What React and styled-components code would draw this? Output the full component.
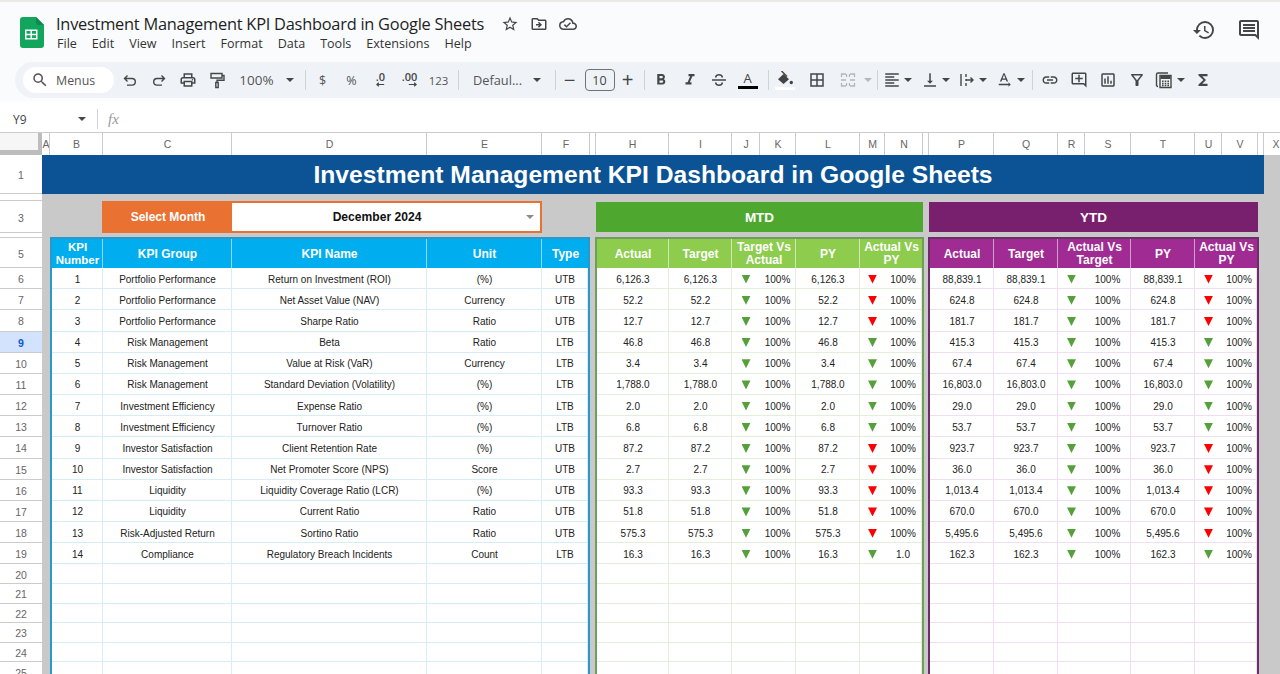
import React from 'react';
import styled, { createGlobalStyle } from 'styled-components';
import {
  MdSearch, MdOutlineLocalPrintshop, MdFormatBold, MdFormatItalic,
  MdBorderAll, MdFormatAlignLeft, MdVerticalAlignBottom,
  MdLink, MdOutlineAddComment, MdOutlineAssessment, MdOutlineFilterAlt, MdFunctions,
  MdHistory, MdOutlineComment, MdStarBorder, MdOutlineDriveFileMove, MdOutlineCloudDone, MdOutlineTextRotationNone,
} from 'react-icons/md';

const GlobalStyle = createGlobalStyle`
  html, body { margin: 0; padding: 0; height: 100%; overflow: hidden; background: #fff; }
  body { font-family: "Liberation Sans", Arial, sans-serif; }
`;

const Page = styled.div`
  width: 1280px;
  height: 674px;
  overflow: hidden;
  background: #f9fbfd;
  border-top: 2px solid #e9ebe4;
  box-sizing: border-box;
  display: flex;
  flex-direction: column;
`;

/* ---------- title bar ---------- */

const TitleBar = styled.header`
  height: 60px;
  flex: none;
  display: flex;
  align-items: flex-start;
  padding: 15px 19px 0 20px;
  box-sizing: border-box;
`;

const DocInfo = styled.div`
  margin-left: 12px;
  flex: 1;
`;

const DocRow = styled.div`
  display: flex;
  align-items: center;
  height: 16px;
  margin-top: -1px;
`;

const DocTitle = styled.div`
  font-family: "Open Sans", sans-serif;
  font-size: 16.4px;
  letter-spacing: -.25px;
  line-height: 16px;
  color: #1f1f1f;
  width: 439px;
  white-space: nowrap;
`;

const TitleIcon = styled.span`
  display: flex;
  width: 29px;
  justify-content: center;
  color: #444746;
  font-size: 18px;
`;

const MenuBar = styled.nav`
  display: flex;
  gap: 15px;
  margin: 5px 0 0 1px;
  font-family: "Open Sans", sans-serif;
  font-size: 12.55px;
  line-height: 14px;
  color: #333;
`;

const SideIcons = styled.div`
  display: flex;
  gap: 21px;
  margin-top: 1px;
  color: #444746;
  font-size: 24px;
`;

const SideIcon = styled.span`
  display: flex;
`;

/* ---------- toolbar ---------- */

const Toolbar = styled.div`
  flex: none;
  height: 36px;
  margin-left: 15px;
  padding-left: 8px;
  background: #eff3f8;
  border-radius: 18px 0 0 18px;
  display: flex;
  align-items: center;
  color: #444746;
`;

const SearchPill = styled.div`
  width: 91px;
  height: 26px;
  box-sizing: border-box;
  padding-left: 8px;
  flex: none;
  display: flex;
  align-items: center;
  gap: 7px;
  background: #fff;
  border-radius: 13px;
  font-family: "Open Sans", sans-serif;
  font-size: 12.4px;
  color: #555;
`;

const Tool = styled.div`
  flex: none;
  width: ${p => p.$w || 29}px;
  margin-left: ${p => p.$ml || 0}px;
  display: flex;
  align-items: center;
  justify-content: center;
  font-size: ${p => p.$size || 18}px;
  color: ${p => p.$muted ? '#b4b7ba' : 'inherit'};
`;

const ToolText = styled(Tool)`
  font-family: "Open Sans", sans-serif;
  font-size: ${p => p.$size || 12.5}px;
  color: #555;
  white-space: nowrap;
`;

const Caret = styled.div`
  flex: none;
  width: ${p => p.$w || 10}px;
  margin-left: ${p => p.$ml || 0}px;
  display: flex;
  justify-content: center;

  &::after {
    content: '';
    border-left: 4px solid transparent;
    border-right: 4px solid transparent;
    border-top: 4px solid ${p => p.$muted ? '#b4b7ba' : '#444746'};
  }
`;

const Sep = styled.div`
  flex: none;
  width: 1px;
  height: 20px;
  margin-left: ${p => p.$l || 0}px;
  margin-right: ${p => p.$r || 0}px;
  background: #cfd3d8;
`;

const SizeBox = styled.div`
  flex: none;
  width: 30px;
  height: 22px;
  margin-left: 5px;
  box-sizing: border-box;
  border: 1px solid #6f7276;
  border-radius: 4px;
  display: flex;
  align-items: center;
  justify-content: center;
  font-family: "Open Sans", sans-serif;
  font-size: 12.5px;
  color: #444;
`;

const Decimal = styled.div`
  display: flex;
  flex-direction: column;
  align-items: flex-end;
  font-family: "Open Sans", sans-serif;
  font-size: 11px;
  font-weight: 600;
  line-height: 11px;
  margin-top: -2px;
`;

const ColorIcon = styled.div`
  display: flex;
  flex-direction: column;
  align-items: center;
  width: ${p => p.$w}px;
  font-size: 13px;
  line-height: 13px;
  font-family: "Open Sans", sans-serif;
  color: #444;
`;

const ColorBar = styled.div`
  align-self: stretch;
  height: 3px;
  margin-top: ${p => p.$top || 1}px;
  background: ${p => p.$color};
`;

/* ---------- formula bar ---------- */

const FormulaBar = styled.div`
  flex: none;
  height: 34px;
  box-sizing: border-box;
  padding-top: 8px;
  background: linear-gradient(#f9fbfd 0, #fff 6px);
  display: flex;
  align-items: center;
  color: #444;
`;

const CellRef = styled.div`
  width: 63px;
  padding-left: 13px;
  font-family: "Open Sans", sans-serif;
  font-size: 12px;
`;

const Fx = styled.div`
  margin-left: 10px;
  font-family: "Liberation Serif", serif;
  font-style: italic;
  font-size: 15px;
  color: #999;
`;

/* ---------- sheet ---------- */

const Sheet = styled.div`
  flex: 1;
  display: grid;
  grid-template-columns: 42px 8px 53px 129px 195px 115px 48px 6px 73px 63px 28px 36px 64px 25px 38px 6px 65px 64px 27px 46px 64px 27px 36px 6px 24px;
  grid-template-rows: 22px 39px 7px 32px 5px 30px repeat(14, 21.18px) repeat(7, 19.6px);
  background: #c9c9c9;
  overflow: hidden;
  border-top: 1px solid #ccc;
`;

const Corner = styled.div`
  grid-column: 1;
  grid-row: 1;
  background: #f6f6f6;
  border-right: 4px solid #bdbdbd;
  border-bottom: 5px solid #bdbdbd;
`;

const ColHead = styled.div`
  background: #fff;
  border-right: 1px solid #ccc;
  box-sizing: border-box;
  padding-left: 1px;
  display: flex;
  align-items: center;
  justify-content: center;
  overflow: hidden;
  font-size: 10.5px;
  color: #666;
`;

const RowHead = styled.div`
  grid-column: 1;
  grid-row: ${p => p.$row};
  background: ${p => p.$active ? '#d3e3fd' : '#fff'};
  border-bottom: 1px solid #ccc;
  box-sizing: border-box;
  display: flex;
  align-items: ${p => p.$thin ? 'flex-start' : 'center'};
  justify-content: center;
  overflow: hidden;
  padding-top: ${p => p.$thin || 2}px;
  font-size: 10.5px;
  line-height: 12px;
  font-weight: ${p => p.$active ? 700 : 400};
  color: ${p => p.$active ? '#0b57d0' : '#666'};
`;

const Banner = styled.div`
  grid-column: 2 / 25;
  grid-row: 2;
  background: #0b5394;
  padding-top: 1px;
  display: flex;
  align-items: center;
  justify-content: center;
  font-size: 24.65px;
  font-weight: 700;
  color: #fff;
`;

const SelectLabel = styled.div`
  grid-column: 4;
  grid-row: 4;
  margin-left: -1px;
  padding-left: 2px;
  background: #e97132;
  display: flex;
  align-items: center;
  justify-content: center;
  font-size: 12px;
  font-weight: 700;
  color: #fff;
`;

const SelectBox = styled.div`
  grid-column: 5 / 7;
  grid-row: 4;
  background: #fff;
  border: 2px solid #e97132;
  border-left: none;
  box-sizing: border-box;
  position: relative;
  display: flex;
  align-items: center;
  justify-content: center;
  padding-right: 18px;
  font-size: 12.1px;
  font-weight: 700;
  color: #111;

  &::after {
    content: '';
    position: absolute;
    right: 6px;
    top: 12px;
    border-left: 4px solid transparent;
    border-right: 4px solid transparent;
    border-top: 4px solid #8a8a8a;
  }
`;

const SectionBanner = styled.div`
  grid-column: ${p => p.$col};
  grid-row: 4;
  background: ${p => p.$bg};
  margin: 1px 0;
  display: flex;
  align-items: center;
  justify-content: center;
  font-size: 13.5px;
  font-weight: 700;
  color: #fff;
`;

const Panel = styled.section`
  grid-column: ${p => p.$col};
  grid-row: 6 / 28;
  display: grid;
  grid-template-columns: subgrid;
  grid-template-rows: subgrid;
  background: #fff;
  border: 2px solid ${p => p.$edge};
  border-bottom: none;
  box-sizing: border-box;
  margin: -1px ${p => p.$out || 0}px 0;
`;

const HeadCell = styled.div`
  grid-column: span ${p => p.$span || 1};
  background: ${p => p.$bg};
  border-right: 1px solid rgba(255, 255, 255, .55);
  box-sizing: border-box;
  padding: 1px 0 0 1px;
  display: flex;
  align-items: center;
  justify-content: center;
  text-align: center;
  font-size: ${p => p.$small ? 11.5 : 12}px;
  line-height: 13px;
  font-weight: 700;
  color: #fff;

  &:nth-child(${p => p.$last}) { border-right: none; }
`;

const Cell = styled.div`
  grid-column: span ${p => p.$span || 1};
  border-right: 1px solid ${p => p.$line};
  border-bottom: 1px solid ${p => p.$line};
  box-sizing: border-box;
  padding: 2px 0 0 1px;
  display: flex;
  align-items: center;
  justify-content: center;
  white-space: nowrap;
  overflow: hidden;
  font-size: 10px;
  color: #222;
`;

const Indicator = styled(Cell)`
  display: grid;
  grid-template-columns: subgrid;
  justify-items: center;
  padding: 2px 0 0;
`;

const Arrow = styled.span`
  width: 9px;
  height: 9px;
  background: ${p => p.$up ? '#ff0000' : '#55a03a'};
  clip-path: polygon(0 0, 100% 0, 50% 100%);
`;

/* ---------- data ---------- */

const colLetters = 'A B C D E F G H I J K L M N O P Q R S T U V W X'.split(' ');
const hiddenLetters = ['G', 'O', 'W'];

const kpis = [
  [1, 'Portfolio Performance', 'Return on Investment (ROI)', '(%)', 'UTB', '6,126.3', '88,839.1'],
  [2, 'Portfolio Performance', 'Net Asset Value (NAV)', 'Currency', 'UTB', '52.2', '624.8'],
  [3, 'Portfolio Performance', 'Sharpe Ratio', 'Ratio', 'UTB', '12.7', '181.7'],
  [4, 'Risk Management', 'Beta', 'Ratio', 'LTB', '46.8', '415.3'],
  [5, 'Risk Management', 'Value at Risk (VaR)', 'Currency', 'LTB', '3.4', '67.4'],
  [6, 'Risk Management', 'Standard Deviation (Volatility)', '(%)', 'LTB', '1,788.0', '16,803.0'],
  [7, 'Investment Efficiency', 'Expense Ratio', '(%)', 'LTB', '2.0', '29.0'],
  [8, 'Investment Efficiency', 'Turnover Ratio', '(%)', 'LTB', '6.8', '53.7'],
  [9, 'Investor Satisfaction', 'Client Retention Rate', '(%)', 'UTB', '87.2', '923.7'],
  [10, 'Investor Satisfaction', 'Net Promoter Score (NPS)', 'Score', 'UTB', '2.7', '36.0'],
  [11, 'Liquidity', 'Liquidity Coverage Ratio (LCR)', '(%)', 'UTB', '93.3', '1,013.4'],
  [12, 'Liquidity', 'Current Ratio', 'Ratio', 'UTB', '51.8', '670.0'],
  [13, 'Risk-Adjusted Return', 'Sortino Ratio', 'Ratio', 'UTB', '575.3', '5,495.6'],
  [14, 'Compliance', 'Regulatory Breach Incidents', 'Count', 'LTB', '16.3', '162.3'],
];

const blankRows = [20, 21, 22, 23, 24, 25, 26];

const SheetsLogo = () => (
  <svg width="24" height="31" viewBox="0 0 24 31">
    <path d="M3 0H16l8 8v20a3 3 0 0 1-3 3H3a3 3 0 0 1-3-3V3a3 3 0 0 1 3-3z" fill="#12a55c" />
    <path d="M16 0l8 8h-6a2 2 0 0 1-2-2z" fill="#0e8a4c" />
    <path d="M5 12.500h12.500v10H5z M6.500 14v2.800h4V14z M12 14v2.800h4V14z M6.500 18.300V21h4v-2.700z M12 18.300V21h4v-2.700z" fill="#fff" fillRule="evenodd" />
  </svg>
);

const lineIcon = { width: 18, height: 18, viewBox: '0 0 18 18', fill: 'none', stroke: 'currentColor', strokeWidth: 1.4 };

const UndoIcon = () => (
  <svg {...lineIcon}><path d="M6.500 4.500L3.500 7.500l3 3M3.500 7.500H11a3.300 3.300 0 0 1 0 6.600H6" /></svg>
);

const RedoIcon = () => (
  <svg {...lineIcon}><path d="M11.500 4.500l3 3-3 3M14.500 7.500H7a3.300 3.300 0 0 0 0 6.600h5" /></svg>
);

const PaintIcon = () => (
  <svg {...lineIcon}>
    <path d="M3 2.500h11v4.500H3zM14 4.500h2v4.700H9v2.300M7.800 11.500h2.400v5H7.800z" />
  </svg>
);

const StrikeIcon = () => (
  <svg {...lineIcon}><path d="M2 9h14M5.500 6.500C6 4.500 7.500 3.800 9 3.800s3 .7 3.500 2.700M5.500 11.500c.5 2 2 2.700 3.500 2.700s3-.7 3.500-2.700" /></svg>
);

const FillIcon = () => (
  <svg width="18" height="15" viewBox="0 0 18 15">
    <path d="M5.500 0L11 5.500" fill="none" stroke="currentColor" strokeWidth="1.400" />
    <path d="M2 8.200L7.500 3l5.500 5.200L7.500 13z" fill="currentColor" />
    <circle cx="15.300" cy="11.500" r="1.700" fill="currentColor" />
  </svg>
);

const CalcIcon = () => (
  <svg {...lineIcon}>
    <path d="M3 15.500C2 15.500 1.500 15 1.500 14V3.500C1.500 2.500 2 2 3 2h10" />
    <path d="M5 4.500h11v12H5z" />
    <path d="M5.500 5h10v3h-10z" fill="currentColor" stroke="none" />
    <path d="M7 10.200h7M7 12.400h7M7 14.600h7" strokeDasharray="1.600 1.100" strokeWidth="1.500" />
  </svg>
);

const MergeIcon = () => (
  <svg {...lineIcon} strokeWidth="1.300">
    <path d="M7 3H2.500v3M2.500 12v3H7M11 3h4.500v3M15.500 12v3H11M2 9h5M11 9h5M7.500 3v3M10.500 3v3M7.500 12v3M10.500 12v3" />
  </svg>
);

const WrapIcon = () => (
  <svg {...lineIcon}>
    <path d="M3 3v12M8 3v3M8 8v2M8 12v3M8 9h7M12.500 6.500L15 9l-2.500 2.500" />
  </svg>
);

const DecimalArrow = ({ flip }) => (
  <svg width="9" height="5" viewBox="0 0 11 6" fill="none" stroke="currentColor" strokeWidth="1.500">
    {flip ? <path d="M1 3h9M7.500.8L10 3 7.500 5.200" /> : <path d="M10 3H1M3.500.8L1 3l2.500 2.200" />}
  </svg>
);

const KpiRows = () => {
  const line = '#d6ecf6';
  return (
    <>
      {kpis.map(k => (
        <React.Fragment key={k[0]}>
          {k.slice(0, 5).map((v, i) => <Cell key={i} $line={line}>{v}</Cell>)}
        </React.Fragment>
      ))}
      {blankRows.map(r => (
        <React.Fragment key={r}>
          {[0, 1, 2, 3, 4].map(i => <Cell key={i} $line={line} />)}
        </React.Fragment>
      ))}
    </>
  );
};

const ValueRows = ({ line, valueAt, lastPct }) => (
  <>
    {kpis.map(k => {
      const v = k[valueAt];
      return (
        <React.Fragment key={k[0]}>
          <Cell $line={line}>{v}</Cell>
          <Cell $line={line}>{v}</Cell>
          <Indicator $span={2} $line={line}><Arrow /><span>100%</span></Indicator>
          <Cell $line={line}>{v}</Cell>
          <Indicator $span={2} $line={line}>
            <Arrow $up={k[4] === 'UTB'} />
            <span>{k[0] === 14 ? lastPct : '100%'}</span>
          </Indicator>
        </React.Fragment>
      );
    })}
    {blankRows.map(r => (
      <React.Fragment key={r}>
        <Cell $line={line} />
        <Cell $line={line} />
        <Cell $line={line} $span={2} />
        <Cell $line={line} />
        <Cell $line={line} $span={2} />
      </React.Fragment>
    ))}
  </>
);

const ValueHead = ({ bg, compare }) => (
  <>
    <HeadCell $bg={bg}>Actual</HeadCell>
    <HeadCell $bg={bg}>Target</HeadCell>
    <HeadCell $bg={bg} $span={2}>{compare}</HeadCell>
    <HeadCell $bg={bg}>PY</HeadCell>
    <HeadCell $bg={bg} $span={2} $last={5}>Actual Vs PY</HeadCell>
  </>
);

export default function App() {
  return (
    <Page>
      <GlobalStyle />
      <TitleBar>
        <SheetsLogo />
        <DocInfo>
          <DocRow>
            <DocTitle>Investment Management KPI Dashboard in Google Sheets</DocTitle>
            <TitleIcon><MdStarBorder /></TitleIcon>
            <TitleIcon><MdOutlineDriveFileMove /></TitleIcon>
            <TitleIcon><MdOutlineCloudDone /></TitleIcon>
          </DocRow>
          <MenuBar>
            {['File', 'Edit', 'View', 'Insert', 'Format', 'Data', 'Tools', 'Extensions', 'Help'].map(m => <span key={m}>{m}</span>)}
          </MenuBar>
        </DocInfo>
        <SideIcons>
          <SideIcon><MdHistory /></SideIcon>
          <SideIcon><MdOutlineComment /></SideIcon>
        </SideIcons>
      </TitleBar>

      <Toolbar>
        <SearchPill><MdSearch size={18} />Menus</SearchPill>
        <Tool $ml={1.5}><UndoIcon /></Tool>
        <Tool><RedoIcon /></Tool>
        <Tool><MdOutlineLocalPrintshop /></Tool>
        <Tool><PaintIcon /></Tool>
        <ToolText $w={50} $size={13.5}>100%</ToolText>
        <Caret $w={16} />
        <Sep $l={7} $r={2.5} />
        <ToolText>$</ToolText>
        <ToolText>%</ToolText>
        <Tool><Decimal>.0<DecimalArrow /></Decimal></Tool>
        <Tool><Decimal>.00<DecimalArrow flip /></Decimal></Tool>
        <ToolText $size={11.5}>123</ToolText>
        <Sep $l={5} />
        <ToolText $w={50} $ml={13.5} $size={12.8}>Defaul...</ToolText>
        <Caret $w={16} $ml={6} />
        <Sep $l={10} $r={4} />
        <Tool $w={20} $size={20}>−</Tool>
        <SizeBox>10</SizeBox>
        <Tool $w={20} $ml={3} $size={20}>+</Tool>
        <Sep $l={6} $r={1.5} />
        <Tool><MdFormatBold /></Tool>
        <Tool><MdFormatItalic /></Tool>
        <Tool><StrikeIcon /></Tool>
        <Tool><ColorIcon $w={20}>A<ColorBar $color="#000" /></ColorIcon></Tool>
        <Sep $l={5.5} />
        <Tool $w={32}><ColorIcon $w={20}><FillIcon /><ColorBar $color="#fff" $top={1} /></ColorIcon></Tool>
        <Tool $w={32}><MdBorderAll /></Tool>
        <Tool $w={30} $muted><MergeIcon /></Tool>
        <Caret $muted />
        <Sep $l={4} $r={2} />
        <Tool $w={24}><MdFormatAlignLeft /></Tool>
        <Caret $w={8} />
        <Tool $w={24} $ml={6}><MdVerticalAlignBottom /></Tool>
        <Caret $w={8} />
        <Tool $w={24} $ml={5}><WrapIcon /></Tool>
        <Caret $w={8} />
        <Tool $w={24} $ml={5}><MdOutlineTextRotationNone /></Tool>
        <Caret />
        <Sep $l={6} $r={2.5} />
        <Tool><MdLink /></Tool>
        <Tool><MdOutlineAddComment /></Tool>
        <Tool><MdOutlineAssessment /></Tool>
        <Tool><MdOutlineFilterAlt /></Tool>
        <Tool $w={25}><CalcIcon /></Tool>
        <Caret />
        <Tool $ml={2}><MdFunctions /></Tool>
      </Toolbar>

      <FormulaBar>
        <CellRef>Y9</CellRef>
        <Caret $w={12} />
        <Sep $l={9} />
        <Fx>fx</Fx>
      </FormulaBar>

      <Sheet>
        <Corner />
        {colLetters.map(c => <ColHead key={c}>{hiddenLetters.includes(c) ? '' : c}</ColHead>)}
        {Array.from({ length: 26 }, (_, i) => i + 1).map(n => (
          <RowHead key={n} $row={n + 1} $active={n === 9} $thin={n === 2 ? 4 : n === 4 ? 2 : 0}>{n}</RowHead>
        ))}
        <Banner>Investment Management KPI Dashboard in Google Sheets</Banner>
        <SelectLabel>Select Month</SelectLabel>
        <SelectBox>December 2024</SelectBox>
        <SectionBanner $col="9 / 16" $bg="#4ea72e">MTD</SectionBanner>
        <SectionBanner $col="17 / 24" $bg="#78206e">YTD</SectionBanner>

        <Panel $col="3 / 8" $edge="#2a98c8">
          <HeadCell $bg="#00aeef" $small>KPI Number</HeadCell>
          <HeadCell $bg="#00aeef">KPI Group</HeadCell>
          <HeadCell $bg="#00aeef">KPI Name</HeadCell>
          <HeadCell $bg="#00aeef">Unit</HeadCell>
          <HeadCell $bg="#00aeef" $last={5}>Type</HeadCell>
          <KpiRows />
        </Panel>
        <Panel $col="9 / 16" $edge="#6f9e5b" $out={-1}>
          <ValueHead bg="#8dcc4d" compare="Target Vs Actual" />
          <ValueRows line="#e2efdb" valueAt={5} lastPct="1.0" />
        </Panel>
        <Panel $col="17 / 24" $edge="#6c2d68" $out={-1}>
          <ValueHead bg="#a02b93" compare="Actual Vs Target" />
          <ValueRows line="#f0dff0" valueAt={6} lastPct="100%" />
        </Panel>
      </Sheet>
    </Page>
  );
}
